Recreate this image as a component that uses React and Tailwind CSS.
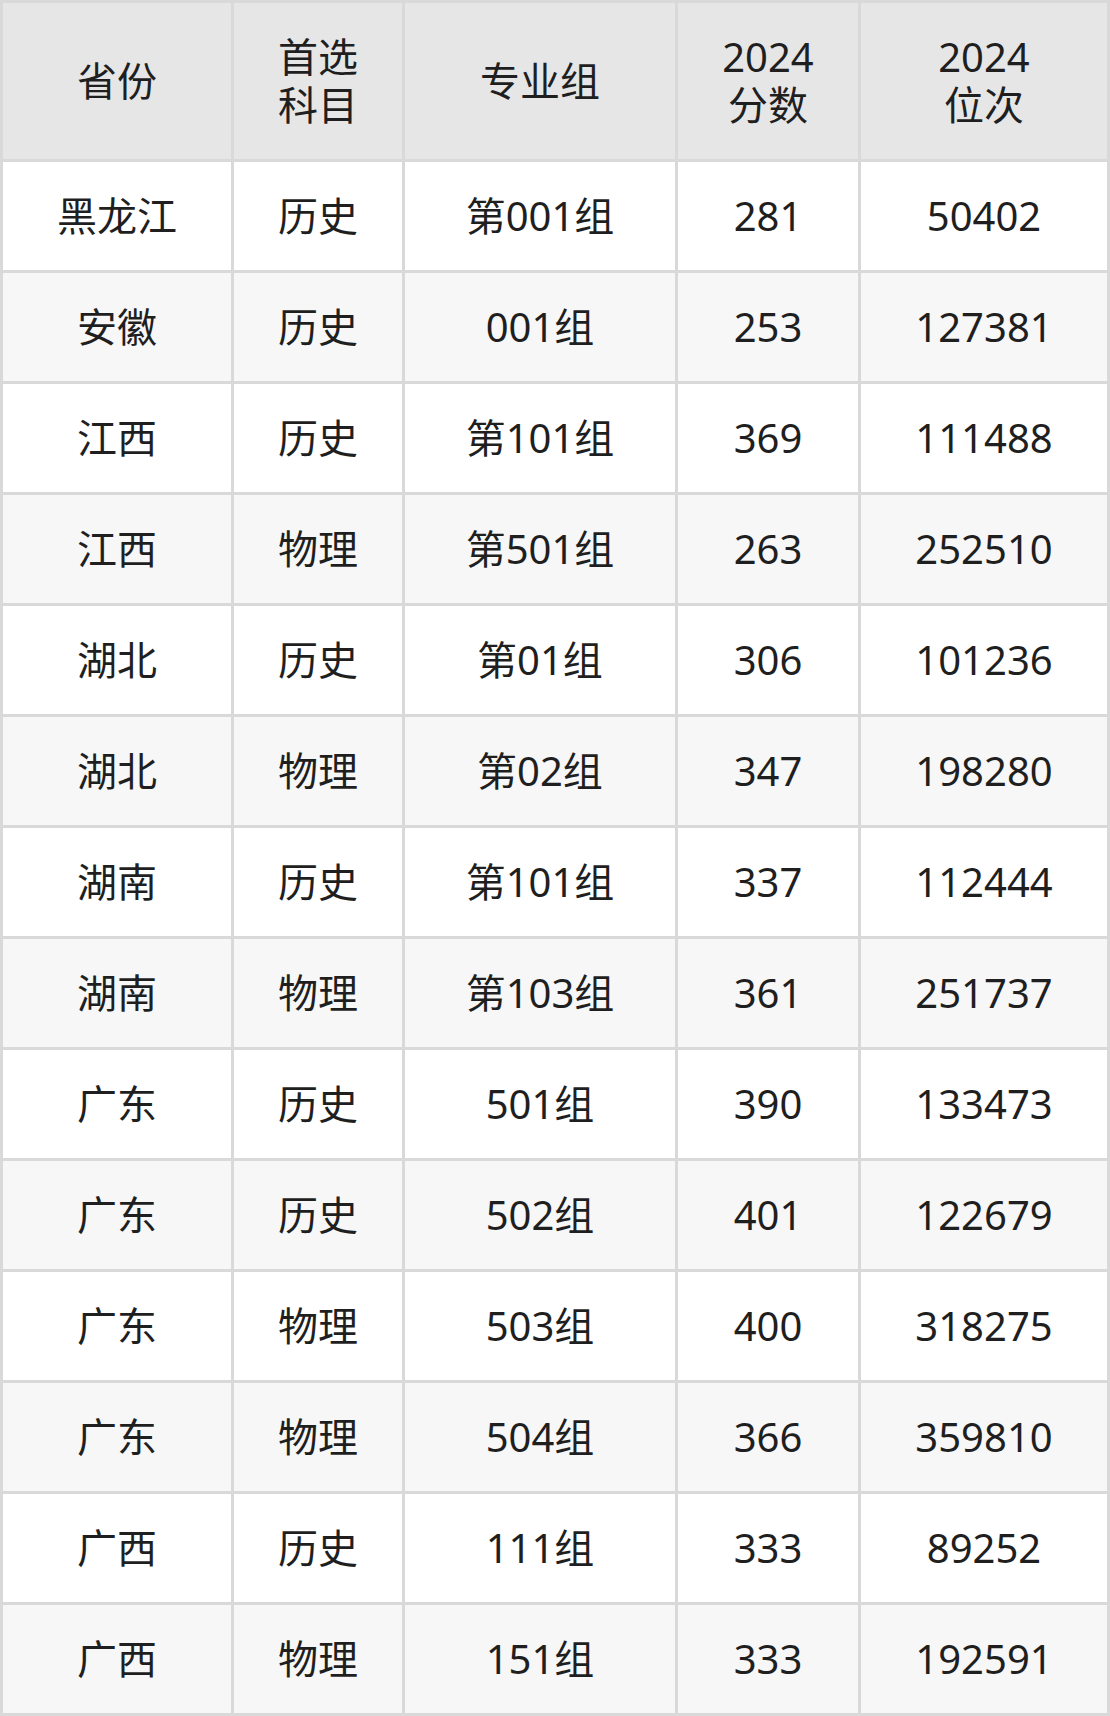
import React from "react";

const rows = [
  ["黑龙江", "历史", "第001组", "281", "50402"],
  ["安徽", "历史", "001组", "253", "127381"],
  ["江西", "历史", "第101组", "369", "111488"],
  ["江西", "物理", "第501组", "263", "252510"],
  ["湖北", "历史", "第01组", "306", "101236"],
  ["湖北", "物理", "第02组", "347", "198280"],
  ["湖南", "历史", "第101组", "337", "112444"],
  ["湖南", "物理", "第103组", "361", "251737"],
  ["广东", "历史", "501组", "390", "133473"],
  ["广东", "历史", "502组", "401", "122679"],
  ["广东", "物理", "503组", "400", "318275"],
  ["广东", "物理", "504组", "366", "359810"],
  ["广西", "历史", "111组", "333", "89252"],
  ["广西", "物理", "151组", "333", "192591"],
];

const headers = [["省份"], ["首选", "科目"], ["专业组"], ["2024", "分数"], ["2024", "位次"]];

export default function App() {
  return (
    <div
      className="w-[1110px] bg-[#d9d9d9] p-[3px] grid grid-cols-[228px_168px_270px_180px_246px] grid-rows-[156px_repeat(14,108px)] gap-[3px] text-[#1f1f1f] text-[40px]"
      style={{ fontFamily: '"Noto Sans", "Noto Sans CJK SC", sans-serif' }}
    >
      {headers.map((h, i) => (
        <div
          key={i}
          className="bg-[#e6e6e6] flex flex-col items-center justify-center leading-[48px]"
        >
          {h.map((line) => (
            <span key={line}>{line}</span>
          ))}
        </div>
      ))}
      {rows.map((r, ri) =>
        r.map((cell, ci) => (
          <div
            key={ri + "-" + ci}
            className={
              "flex items-center justify-center " +
              (ri % 2 === 0 ? "bg-white" : "bg-[#f7f7f7]")
            }
          >
            {cell}
          </div>
        ))
      )}
    </div>
  );
}
